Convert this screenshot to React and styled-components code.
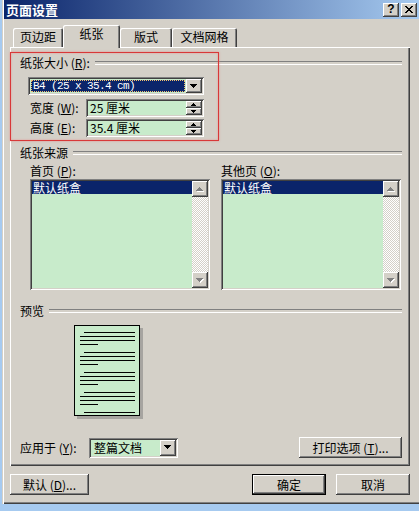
import styled, { createGlobalStyle } from 'styled-components'

const GlobalStyle = createGlobalStyle`
  html, body {
    margin: 0;
    padding: 0;
  }
  body {
    width: 419px;
    height: 511px;
    overflow: hidden;
    background: #a6caf0;
    font-family: "Noto Sans CJK SC", "Liberation Sans", sans-serif;
    font-size: 12px;
    color: #000;
  }
  * {
    box-sizing: border-box;
  }
`

const raised = `
  background: #d4d0c8;
  box-shadow: inset -1px -1px #404040, inset 1px 1px #fff, inset -2px -2px #808080;
`

const sunken = `
  box-shadow: inset 1px 1px #808080, inset -1px -1px #fff, inset 2px 2px #404040, inset -2px -2px #d4d0c8;
`

const GREEN = '#c8ebcb'
const NAVY = '#0a246a'

const Window = styled.div`
  width: 417px;
  height: 504px;
  margin-left: 2px;
  padding: 0 0 2px 2px;
  display: flex;
  flex-direction: column;
  background: #d4d0c8;
  box-shadow: inset 1px 0 #d4d0c8, inset 2px 0 #fff, inset 0 -1px #404040, inset 0 -2px #808080;
`

const TitleBar = styled.div`
  height: 19px;
  display: flex;
  align-items: center;
  padding: 0 2px 0 2px;
  background: linear-gradient(to right, ${NAVY}, #a6caf0);
`

const TitleText = styled.div`
  flex: 1;
  color: #fff;
  font-weight: bold;
  font-size: 13px;
  line-height: 19px;
`

const CaptionButtons = styled.div`
  display: flex;
  gap: 2px;
`

const CaptionButton = styled.div`
  ${raised}
  width: 16px;
  height: 14px;
  display: flex;
  align-items: center;
  justify-content: center;
  font-family: "Liberation Sans", sans-serif;
  font-weight: bold;
  font-size: 12px;
  line-height: 14px;
  padding-bottom: 1px;
`

const Content = styled.div`
  flex: 1;
  display: flex;
  flex-direction: column;
  padding: 0 9px 0 6px;
`

const TabRow = styled.div`
  height: 28px;
  display: flex;
  align-items: flex-end;
  padding-left: 3px;
  position: relative;
  z-index: 1;
`

const Tab = styled.div`
  width: ${p => p.$w}px;
  height: ${p => (p.$active ? 23 : 19)}px;
  margin-bottom: ${p => (p.$active ? -1 : 0)}px;
  background: #d4d0c8;
  border-radius: 2px 2px 0 0;
  box-shadow: inset 1px 1px #fff, inset -1px 0 #404040, inset -2px 0 #808080;
  display: flex;
  justify-content: center;
  padding-top: ${p => (p.$active ? 2 : 2)}px;
  line-height: 14px;
`

const Panel = styled.div`
  position: relative;
  width: 400px;
  height: 419px;
  padding: 0 8px 0 10px;
  display: flex;
  flex-direction: column;
  box-shadow: inset 1px 1px #fff, inset -1px -1px #404040, inset -2px -2px #808080;
`

const RedMark = styled.div`
  position: absolute;
  left: 0;
  top: 5px;
  width: 209px;
  height: 89px;
  border: 1px solid #d83838;
  box-shadow: 0 0 2px rgba(240, 120, 120, 0.7), inset 0 0 2px rgba(240, 120, 120, 0.7);
  pointer-events: none;
`

const GroupHeader = styled.div`
  display: flex;
  align-items: center;
  gap: 5px;
  height: 14px;
  line-height: 14px;
  margin-top: ${p => p.$top}px;
  white-space: nowrap;

  &::after {
    content: '';
    flex: 1;
    height: 2px;
    border-top: 1px solid #808080;
    border-bottom: 1px solid #fff;
  }
`

const Combo = styled.div`
  ${sunken}
  width: ${p => p.$w}px;
  height: ${p => p.$h}px;
  margin-left: ${p => p.$left || 0}px;
  margin-top: ${p => p.$top || 0}px;
  background: ${GREEN};
  padding: 2px;
  display: flex;
`

const ComboValue = styled.div`
  flex: 1;
  margin: 1px 1px 1px 1px;
  padding-left: 2px;
  line-height: 12px;
  white-space: nowrap;
  background: ${p => (p.$selected ? NAVY : 'transparent')};
  color: ${p => (p.$selected ? '#fff' : '#000')};
  outline: ${p => (p.$selected ? '1px dotted #f0c070' : 'none')};
  outline-offset: -1px;
  display: flex;
  align-items: center;
`

const Mono = styled.span`
  font-family: "Liberation Mono", monospace;
  font-size: 11px;
  letter-spacing: -0.6px;
`

const DropButton = styled.div`
  ${raised}
  width: 16px;
  display: flex;
  align-items: center;
  justify-content: center;
`

const FieldRow = styled.div`
  display: flex;
  align-items: center;
  margin-top: ${p => p.$top}px;
  margin-left: 10px;
`

const FieldLabel = styled.div`
  width: ${p => p.$w}px;
  line-height: 14px;
  white-space: nowrap;
`

const Spinner = styled.div`
  ${sunken}
  width: 118px;
  height: 18px;
  padding: 2px;
  background: ${GREEN};
  display: flex;
`

const SpinValue = styled.div`
  flex: 1;
  padding-left: 2px;
  line-height: 14px;
  white-space: nowrap;
`

const SpinButtons = styled.div`
  width: 16px;
  display: flex;
  flex-direction: column;
`

const SpinButton = styled.div`
  ${raised}
  flex: 1;
  display: flex;
  align-items: center;
  justify-content: center;
`

const Columns = styled.div`
  display: flex;
  gap: 11px;
  margin-left: 10px;
  margin-top: 4px;
`

const Column = styled.div`
  width: 180px;
  display: flex;
  flex-direction: column;
`

const ListLabel = styled.div`
  height: 14px;
  line-height: 14px;
  margin-bottom: 1px;
`

const ListBox = styled.div`
  ${sunken}
  height: 111px;
  padding: 2px;
  background: ${GREEN};
  display: flex;
`

const ListItems = styled.div`
  flex: 1;
`

const ListItem = styled.div`
  height: 13px;
  line-height: 13px;
  padding-left: 1px;
  background: ${p => (p.$selected ? NAVY : 'transparent')};
  color: ${p => (p.$selected ? '#fff' : '#000')};
`

const ScrollBar = styled.div`
  width: 16px;
  display: flex;
  flex-direction: column;
`

const ScrollButton = styled.div`
  ${raised}
  height: 16px;
  display: flex;
  align-items: center;
  justify-content: center;
`

const ScrollTrack = styled.div`
  flex: 1;
  background: repeating-conic-gradient(#fff 0 25%, #d4d0c8 0 50%) 0 0 / 2px 2px;
`

const PreviewBox = styled.div`
  margin-top: 7px;
  margin-left: 54px;
  height: 95px;
`

const ApplyRow = styled.div`
  display: flex;
  align-items: center;
  margin-top: 17px;
  height: 21px;
`

const PushButton = styled.div`
  width: ${p => p.$w}px;
  height: 21px;
  margin-left: ${p => p.$left || 0}px;
  ${raised}
  ${p => p.$default && `
    box-shadow: inset 0 0 0 1px #000, inset -2px -2px #404040, inset 2px 2px #fff, inset -3px -3px #808080;
  `}
  display: flex;
  align-items: center;
  justify-content: center;
  line-height: 14px;
  white-space: nowrap;
`

const Footer = styled.div`
  display: flex;
  margin-top: 8px;
`

const Arrow = ({ up, color = '#000', small }) => {
  const d = small
    ? up
      ? 'M2 0h1v1h1v1h1v1H0V2h1V1h1z'
      : 'M0 0h5v1H4v1H3v1H2V2H1V1H0z'
    : up
      ? 'M3 0h1v1h1v1h1v1h1v1H0V3h1V2h1V1h1z'
      : 'M0 0h7v1H6v1H5v1H4v1H3V3H2V2H1V1H0z'
  const w = small ? 5 : 7
  const h = small ? 3 : 4
  return (
    <svg width={w + 1} height={h + 1} viewBox={`0 0 ${w + 1} ${h + 1}`} shapeRendering="crispEdges">
      {color !== '#000' && <path d={d} fill="#fff" transform="translate(1 1)" />}
      <path d={d} fill={color} />
    </svg>
  )
}

const CloseGlyph = () => (
  <svg width="8" height="7" viewBox="0 0 8 7" shapeRendering="crispEdges">
    <path
      d="M0 0h2v1h1v1h2V1h1V0h2v1H7v1H6v1H5v1h1v1h1v1h1v1H6V6H5V5H3v1H2v1H0V6h1V5h1V4h1V3H2V2H1V1H0z"
      fill="#000"
    />
  </svg>
)

const PagePreview = () => {
  const groups = [0, 1, 2, 3]
  return (
    <svg width="70" height="95" viewBox="0 0 70 95" shapeRendering="crispEdges">
      <rect x="3" y="3" width="66" height="91" fill="#808080" opacity="0.55" />
      <rect x="0.5" y="0.5" width="65" height="90" fill={GREEN} stroke="#000" />
      {groups.map(g => {
        const y = 7 + g * 20
        return (
          <g key={g} stroke="#000">
            <line x1="10" x2="61" y1={y + 0.5} y2={y + 0.5} />
            <line x1="6" x2="61" y1={y + 4.5} y2={y + 4.5} />
            <line x1="6" x2="61" y1={y + 8.5} y2={y + 8.5} />
            <line x1="6" x2="24" y1={y + 12.5} y2={y + 12.5} />
          </g>
        )
      })}
      <line x1="10" x2="61" y1="87.5" y2="87.5" stroke="#000" />
    </svg>
  )
}

const ScrollList = ({ item }) => (
  <ListBox>
    <ListItems>
      <ListItem $selected>{item}</ListItem>
    </ListItems>
    <ScrollBar>
      <ScrollButton>
        <Arrow up color="#808080" />
      </ScrollButton>
      <ScrollTrack />
      <ScrollButton>
        <Arrow color="#808080" />
      </ScrollButton>
    </ScrollBar>
  </ListBox>
)

const SpinField = ({ children }) => (
  <Spinner>
    <SpinValue>{children}</SpinValue>
    <SpinButtons>
      <SpinButton>
        <Arrow up small />
      </SpinButton>
      <SpinButton>
        <Arrow small />
      </SpinButton>
    </SpinButtons>
  </Spinner>
)

const tabs = [
  { label: '页边距', w: 50 },
  { label: '纸张', w: 57, active: true },
  { label: '版式', w: 52 },
  { label: '文档网格', w: 65 },
]

export default function App() {
  return (
    <>
      <GlobalStyle />
      <Window>
        <TitleBar>
          <TitleText>页面设置</TitleText>
          <CaptionButtons>
            <CaptionButton>?</CaptionButton>
            <CaptionButton>
              <CloseGlyph />
            </CaptionButton>
          </CaptionButtons>
        </TitleBar>
        <Content>
          <TabRow>
            {tabs.map(t => (
              <Tab key={t.label} $w={t.w} $active={t.active}>
                {t.label}
              </Tab>
            ))}
          </TabRow>
          <Panel>
            <GroupHeader $top={9}>
              <span>
                纸张大小 (<u>R</u>):
              </span>
            </GroupHeader>
            <Combo $w={176} $h={18} $left={8} $top={7}>
              <ComboValue $selected>
                <Mono>B4 (25 x 35.4 cm)</Mono>
              </ComboValue>
              <DropButton>
                <Arrow />
              </DropButton>
            </Combo>
            <FieldRow $top={4}>
              <FieldLabel $w={56}>
                宽度 (<u>W</u>):
              </FieldLabel>
              <SpinField>25 厘米</SpinField>
            </FieldRow>
            <FieldRow $top={2}>
              <FieldLabel $w={56}>
                高度 (<u>E</u>):
              </FieldLabel>
              <SpinField>35.4 厘米</SpinField>
            </FieldRow>

            <GroupHeader $top={9}>
              <span>纸张来源</span>
            </GroupHeader>
            <Columns>
              <Column>
                <ListLabel>
                  首页 (<u>P</u>):
                </ListLabel>
                <ScrollList item="默认纸盒" />
              </Column>
              <Column>
                <ListLabel>
                  其他页 (<u>O</u>):
                </ListLabel>
                <ScrollList item="默认纸盒" />
              </Column>
            </Columns>

            <GroupHeader $top={14}>
              <span>预览</span>
            </GroupHeader>
            <PreviewBox>
              <PagePreview />
            </PreviewBox>

            <ApplyRow>
              <FieldLabel $w={69}>
                应用于 (<u>Y</u>):
              </FieldLabel>
              <Combo $w={89} $h={20}>
                <ComboValue>整篇文档</ComboValue>
                <DropButton>
                  <Arrow />
                </DropButton>
              </Combo>
              <PushButton $w={103} $left={121}>
                打印选项 (<u>T</u>)...
              </PushButton>
            </ApplyRow>
            <RedMark />
          </Panel>
          <Footer>
            <PushButton $w={79}>
              默认 (<u>D</u>)...
            </PushButton>
            <PushButton $w={74} $left={163} $default>
              确定
            </PushButton>
            <PushButton $w={74} $left={10}>
              取消
            </PushButton>
          </Footer>
        </Content>
      </Window>
    </>
  )
}
